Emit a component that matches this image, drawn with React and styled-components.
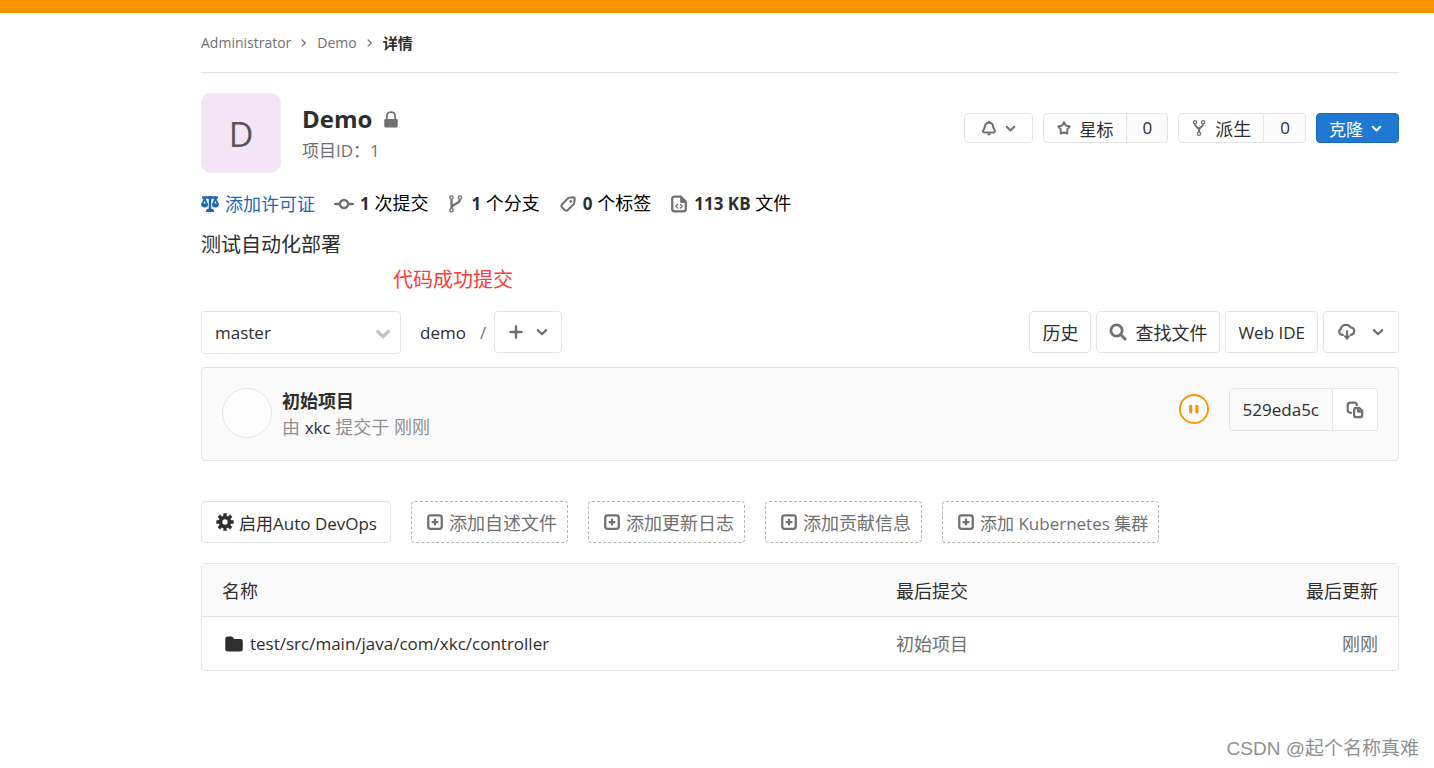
import React from 'react';
import styled, { createGlobalStyle, css } from 'styled-components';

const App = () => (
  <Page>
    <GlobalStyle />
    <TopBar />
    <Container>
      <Breadcrumbs aria-label="breadcrumb">
        <a href="#administrator">Administrator</a>
        <Icon name="angle-right" size={10} />
        <a href="#demo">Demo</a>
        <Icon name="angle-right" size={10} />
        <strong>详情</strong>
      </Breadcrumbs>

      <ProjectHeader>
        <Avatar>D</Avatar>
        <ProjectTitle>
          <h1>
            Demo <Icon name="lock" size={18} />
          </h1>
          <p>项目ID：1</p>
        </ProjectTitle>
        <ProjectActions>
          <SmallButton type="button" aria-label="notifications" $wide>
            <Icon name="bell" size={16} />
            <Icon name="angle-down" size={11} />
          </SmallButton>
          <Group>
            <SmallButton type="button">
              <Icon name="star" size={16} />
              星标
            </SmallButton>
            <Count href="#starrers">0</Count>
          </Group>
          <Group>
            <SmallButton type="button" $size={18}>
              <Icon name="fork" size={16} />
              派生
            </SmallButton>
            <Count href="#forks">0</Count>
          </Group>
          <CloneButton type="button">
            克隆
            <Icon name="angle-down" size={11} />
          </CloneButton>
        </ProjectActions>
      </ProjectHeader>

      <Stats>
        <StatLink href="#license" $primary>
          <Icon name="scale" size={18} />
          添加许可证
        </StatLink>
        <StatLink href="#commits">
          <Icon name="commit" size={20} />
          <span>
            <strong>1</strong> 次提交
          </span>
        </StatLink>
        <StatLink href="#branches">
          <Icon name="branch" size={18} />
          <span>
            <strong>1</strong> 个分支
          </span>
        </StatLink>
        <StatLink href="#tags">
          <Icon name="tag" size={18} />
          <span>
            <strong>0</strong> 个标签
          </span>
        </StatLink>
        <StatLink href="#files">
          <Icon name="doc-code" size={18} />
          <span>
            <strong>113 KB</strong> 文件
          </span>
        </StatLink>
      </Stats>

      <Description>测试自动化部署</Description>
      <Note>代码成功提交</Note>

      <TreeControls>
        <RefPicker>
          <select aria-label="branch" defaultValue="master">
            <option>master</option>
          </select>
          <Icon name="chevron-down" size={16} />
        </RefPicker>
        <Path>
          <a href="#root">demo</a>
          <span>/</span>
        </Path>
        <Button type="button" aria-label="add to tree" $gap={12} $pad={13}>
          <Icon name="plus" size={16} />
          <Icon name="angle-down" size={12} />
        </Button>
        <Spacer />
        <ButtonList>
          <Button type="button" $size={18}>
            历史
          </Button>
          <Button type="button" $size={18} $gap={8}>
            <Icon name="search" size={18} />
            查找文件
          </Button>
          <Button type="button">Web IDE</Button>
          <Button type="button" aria-label="download" $gap={16} $pad={14}>
            <Icon name="download" size={18} />
            <Icon name="angle-down" size={12} />
          </Button>
        </ButtonList>
      </TreeControls>

      <CommitCard>
        <AuthorAvatar />
        <CommitText>
          <a href="#commit">初始项目</a>
          <p>
            由 <a href="#xkc">xkc</a> 提交于 <time>刚刚</time>
          </p>
        </CommitText>
        <PipelineStatus href="#pipeline" aria-label="pipeline pending">
          <Icon name="pending" size={30} />
        </PipelineStatus>
        <Group>
          <Sha>529eda5c</Sha>
          <CopyButton type="button" aria-label="copy commit SHA">
            <Icon name="copy" size={18} />
          </CopyButton>
        </Group>
      </CommitCard>

      <Suggestions>
        <DevOpsButton type="button">
          <Icon name="gear" size={18} />
          启用Auto DevOps
        </DevOpsButton>
        {['添加自述文件', '添加更新日志', '添加贡献信息'].map(label => (
          <DashedButton type="button" key={label}>
            <Icon name="add" size={18} />
            {label}
          </DashedButton>
        ))}
        <DashedButton type="button" $size={17}>
          <Icon name="add" size={18} />
          添加 Kubernetes 集群
        </DashedButton>
      </Suggestions>

      <TreeTable>
        <thead>
          <tr>
            <th>名称</th>
            <th>最后提交</th>
            <th>最后更新</th>
          </tr>
        </thead>
        <tbody>
          <tr>
            <td>
              <a href="#controller">
                <Icon name="folder" size={20} />
                test/src/main/java/com/xkc/controller
              </a>
            </td>
            <td>初始项目</td>
            <td>刚刚</td>
          </tr>
        </tbody>
      </TreeTable>
    </Container>
    <Watermark>CSDN @起个名称真难</Watermark>
  </Page>
);

export default App;

const line = { fill: 'none', stroke: 'currentColor', strokeWidth: 2 };
const round = { ...line, strokeLinecap: 'round', strokeLinejoin: 'round' };

// all glyphs are drawn on a 16px grid
const glyphs = {
  'angle-right': <path {...round} d="M5 3l5 5-5 5" />,
  'angle-down': <path {...round} strokeWidth="3" d="M2.500 5.500L8 11l5.500-5.500" />,
  'chevron-down': (
    <path {...line} strokeWidth="3.400" d="M1.800 5.500L8 11.700l6.200-6.200" />
  ),
  lock: (
    <>
      <path {...line} strokeWidth="1.600" d="M4.300 9V5.500a3.700 3.700 0 0 1 7.400 0V9" />
      <rect x="2" y="8" width="12" height="7.500" rx="1" fill="currentColor" />
    </>
  ),
  bell: (
    <>
      <path
        {...round}
        d="M8 2.800c-2.300 0-3.900 1.600-4.200 4.200C3.500 9 2 9.900 2 11.200c0 .9.700 1.400 1.500 1.400h9c.8 0 1.500-.5 1.500-1.400 0-1.300-1.500-2.200-1.800-4.200C11.900 4.400 10.300 2.800 8 2.800z"
      />
      <path fill="currentColor" d="M7 1h2v2H7zM6 13.400h4a2 2 0 0 1-4 0z" />
    </>
  ),
  star: (
    <path
      {...round}
      d="M8 2.300l1.800 3.300 4 .8-2.500 2.800v4.300L8 12.500l-3.300 1V9.200L2.200 6.400l4-.8z"
    />
  ),
  fork: (
    <>
      <circle {...line} strokeWidth="1.300" cx="4" cy="2.300" r="1.600" />
      <circle {...line} strokeWidth="1.300" cx="12" cy="2.300" r="1.600" />
      <circle {...line} strokeWidth="1.300" cx="8" cy="13.700" r="1.600" />
      <path {...line} d="M4 4.200c0 3.500 4 2.800 4 5.800 0-3 4-2.300 4-5.800M8 9v3.200" />
    </>
  ),
  scale: (
    <>
      <path {...line} strokeWidth="2.200" d="M1 2.300h14M8 2v11" />
      <path {...line} strokeWidth="1.600" d="M3.200 3L1 8.500M3.200 3l2.200 5.500M12.800 3l-2.200 5.500M12.800 3L15 8.500" />
      <path
        fill="currentColor"
        d="M0 7.500h6.400a3.200 3.600 0 0 1-6.400 0zM9.600 7.500H16a3.200 3.600 0 0 1-6.400 0zM6.500 1h3v2.500h-3zM4.300 15a3.700 3 0 0 1 7.400 0z"
      />
    </>
  ),
  commit: (
    <>
      <circle {...line} cx="8" cy="8" r="3.200" />
      <path {...round} d="M1 8h3M12 8h3" />
    </>
  ),
  branch: (
    <>
      <circle {...line} strokeWidth="1.200" cx="4" cy="2.300" r="1.500" />
      <circle {...line} strokeWidth="1.200" cx="4" cy="13.500" r="1.500" />
      <circle {...line} strokeWidth="1.200" cx="11.500" cy="2.300" r="1.500" />
      <path {...line} d="M4 4v8M11.500 4c0 4.500-7 3-7.300 7.500" />
    </>
  ),
  tag: (
    <>
      <path
        {...round}
        strokeWidth="1.800"
        d="M9 2.500l4-.4c.6 0 1 .4 1 1l-.5 4c0 .4-.2.700-.4 1l-5.300 5.200c-.8.800-2 .8-2.800 0l-2.200-2.200c-.8-.8-.8-2 0-2.800L8 2.900c.3-.2.600-.4 1-.4z"
      />
      <circle cx="10.400" cy="5.700" r="1.200" fill="currentColor" />
    </>
  ),
  'doc-code': (
    <>
      <path {...round} d="M9 1.500H4C2.900 1.500 2 2.400 2 3.500v9c0 1.100.9 2 2 2h8c1.100 0 2-.9 2-2V6.500" />
      <path fill="currentColor" d="M9 .5h1l5 5V7h-5a1 1 0 0 1-1-1z" />
      <path {...round} strokeWidth="1.200" d="M6.700 8.500L5.200 10l1.500 1.500M9.300 8.500l1.500 1.500-1.500 1.500" />
    </>
  ),
  plus: <path {...round} strokeWidth="2.400" d="M8 2.500v11M2.500 8h11" />,
  search: (
    <>
      <circle {...line} strokeWidth="2.400" cx="6.700" cy="6.700" r="5" />
      <path {...line} strokeWidth="2.600" d="M10.300 10.300l4.800 4.800" />
    </>
  ),
  download: (
    <>
      <path
        {...round}
        d="M4.300 10.500H4A2.800 2.800 0 0 1 2.500 5.300C2.700 3 5 1.300 7.600 1.600c1.600.1 2.800.9 3.500 2.200 1.900.1 3.300 1.600 3.300 3.400 0 1.800-1.300 3.200-2.900 3.300"
      />
      <path {...line} d="M8 6.500V12" />
      <path fill="currentColor" d="M4.600 11h6.800L8 15.300z" />
    </>
  ),
  pending: (
    <>
      <circle {...line} strokeWidth="1" cx="8" cy="8" r="7.500" fill="#fff" />
      <rect x="5.400" y="5.900" width="1.700" height="4.300" rx=".3" fill="currentColor" />
      <rect x="8.700" y="5.900" width="1.700" height="4.300" rx=".3" fill="currentColor" />
    </>
  ),
  copy: (
    <>
      <path {...round} d="M4.500 10.500H4a2.500 2.500 0 0 1-2.500-2.500V4C1.500 2.500 2.500 1.500 4 1.500h3.200A2.500 2.500 0 0 1 9.700 3.500" />
      <path {...round} d="M9.200 6.200h2.600l2.600 2.500v3.700c0 1.200-.8 2-2 2H9.200c-1.200 0-2-.8-2-2V8.200c0-1.200.8-2 2-2z" />
      <path fill="currentColor" d="M9.800 6l5.200 4.500h-3.700A1.500 1.500 0 0 1 9.800 9z" />
    </>
  ),
  gear: (
    <>
      <circle {...line} strokeWidth="3.200" cx="8" cy="8" r="4" />
      <path
        {...line}
        strokeWidth="3"
        d="M8 .3v3M8 12.700v3M.3 8h3M12.700 8h3M2.500 2.500l2.100 2.100M11.400 11.400l2.100 2.100M2.500 13.500l2.100-2.100M11.400 4.600l2.100-2.100"
      />
    </>
  ),
  add: (
    <>
      <rect {...line} x="2" y="2" width="12" height="12" rx="2" />
      <path {...round} d="M8 5.800v4.400M5.800 8h4.400" />
    </>
  ),
  folder: (
    <path
      fill="currentColor"
      d="M1 4a2 2 0 0 1 2-2h3.500l1.600 2H13a2 2 0 0 1 2 2v6a2 2 0 0 1-2 2H3a2 2 0 0 1-2-2z"
    />
  ),
};

function Icon({ name, size }) {
  return (
    <Svg width={size} height={size} viewBox="0 0 16 16" aria-hidden="true">
      {glyphs[name]}
    </Svg>
  );
}

const GlobalStyle = createGlobalStyle`
  * {
    box-sizing: border-box;
  }

  body {
    margin: 0;
    background: #fff;
    color: #2e2e2e;
    font-family: "Open Sans", "Noto Sans CJK SC", sans-serif;
    font-size: 17px;
    line-height: 26px;
  }

  h1, p {
    margin: 0;
  }

  a {
    color: inherit;
    text-decoration: none;
  }

  button, select {
    font-family: inherit;
    color: inherit;
    cursor: pointer;
  }
`;

const Svg = styled.svg`
  flex: none;
  color: #707070;
`;

const Page = styled.div`
  position: relative;
  min-height: 100vh;
`;

const TopBar = styled.div`
  height: 13px;
  background: #fc9403;
`;

const Container = styled.main`
  padding: 0 35px 0 201px;
`;

const Breadcrumbs = styled.nav`
  display: flex;
  align-items: center;
  gap: 8px;
  height: 60px;
  border-bottom: 1px solid #e5e5e5;
  color: #707070;
  font-size: 14px;

  strong {
    color: #2e2e2e;
    font-size: 15px;
  }
`;

const ProjectHeader = styled.header`
  display: flex;
  align-items: center;
  margin-top: 20px;
`;

const Avatar = styled.div`
  width: 80px;
  height: 80px;
  border: 1px solid #eeeeee;
  border-radius: 10px;
  background: #f3e5f5;
  color: #555;
  font-size: 34px;
  line-height: 80px;
  text-align: center;
`;

const ProjectTitle = styled.div`
  flex: 1;
  margin: 4px 0 0 21px;

  h1 {
    display: flex;
    align-items: center;
    gap: 10px;
    font-size: 24px;
    line-height: 32px;
  }

  p {
    color: #707070;
    line-height: 32px;
  }
`;

const ProjectActions = styled.div`
  display: flex;
  gap: 10px;
  margin-bottom: 10px;
`;

const Group = styled.div`
  display: flex;

  > :first-child {
    border-top-right-radius: 0;
    border-bottom-right-radius: 0;
  }

  > :last-child {
    border-left: 0;
    border-top-left-radius: 0;
    border-bottom-left-radius: 0;
  }
`;

const box = css`
  display: flex;
  align-items: center;
  border: 1px solid #e5e5e5;
  border-radius: 4px;
  background: #fff;
  white-space: nowrap;
`;

const SmallButton = styled.button`
  ${box}
  gap: 8px;
  height: 30px;
  padding: 0 ${props => (props.$wide ? 16 : 12)}px;
  font-size: ${props => props.$size || 17}px;
`;

const Count = styled.a`
  ${box}
  height: 30px;
  padding: 0 15px 0 16px;
  background: #fafafa;
`;

const CloneButton = styled(SmallButton)`
  padding: 0 16px 0 12px;
  border-color: #1b69b6;
  background: #1f78d1;
  color: #fff;

  ${Svg} {
    color: #fff;
  }
`;

const Stats = styled.div`
  display: flex;
  gap: 19px;
  margin-top: 17px;
`;

const StatLink = styled.a`
  display: flex;
  align-items: center;
  gap: 6px;
  color: ${props => (props.$primary ? '#1b69b6' : '#000')};
  font-size: 18px;

  strong {
    color: #2e2e2e;
    font-size: 17px;
  }

  ${Svg} {
    color: ${props => (props.$primary ? '#1b69b6' : '#707070')};
  }
`;

const Description = styled.p`
  margin-top: 13px;
  font-size: 20px;
  line-height: 30px;
`;

const Note = styled.p`
  margin: 4px 0 0 192px;
  color: #fe3b3b;
  font-size: 20px;
  line-height: 32px;
`;

const TreeControls = styled.div`
  display: flex;
  align-items: flex-start;
  margin-top: 15px;
`;

const RefPicker = styled.label`
  ${box}
  width: 200px;
  height: 43px;
  padding-right: 9px;

  select {
    flex: 1;
    height: 100%;
    padding: 0 13px;
    border: 0;
    background: none;
    appearance: none;
    font-size: 17px;
  }

  ${Svg} {
    color: #c4c4c4;
  }
`;

const Path = styled.div`
  display: flex;
  gap: 14px;
  margin: 0 8px 0 19px;
  line-height: 43px;

  span {
    color: #707070;
  }
`;

const Button = styled.button`
  ${box}
  gap: ${props => props.$gap || 0}px;
  height: 42px;
  padding: 0 ${props => props.$pad || 12}px;
  font-size: ${props => props.$size || 17}px;
`;

const Spacer = styled.div`
  flex: 1;
`;

const ButtonList = styled.div`
  display: flex;
  gap: 5px;
`;

const CommitCard = styled.section`
  display: flex;
  align-items: flex-start;
  margin-top: 13px;
  padding: 20px 20px 19px;
  border: 1px solid #e5e5e5;
  border-radius: 4px;
  background: #fafafa;
`;

const AuthorAvatar = styled.div`
  width: 50px;
  height: 50px;
  border: 1px solid #e5e5e5;
  border-radius: 50%;
  background: #fdfdfd;
`;

const CommitText = styled.div`
  flex: 1;
  margin-left: 10px;

  > a {
    display: block;
    font-size: 18px;
    font-weight: 700;
  }

  p {
    color: #919191;
    font-size: 18px;
  }

  p a {
    color: #2e2e2e;
    font-size: 17px;
  }
`;

const PipelineStatus = styled.a`
  display: flex;
  margin: 6px 20px 0 0;

  ${Svg} {
    color: #fc9403;
  }
`;

const Sha = styled.span`
  ${box}
  height: 43px;
  padding: 0 13px;
  background: #fafafa;
`;

const CopyButton = styled.button`
  ${box}
  height: 43px;
  padding: 0 13px;
`;

const Suggestions = styled.div`
  display: flex;
  gap: 20px;
  margin: 40px 0 20px;
`;

const DevOpsButton = styled(Button)`
  gap: 5px;
  padding: 0 13px 0 14px;

  ${Svg} {
    color: #2e2e2e;
  }
`;

const DashedButton = styled(Button)`
  gap: 5px;
  padding: 0 10px 0 14px;
  border: 1px dashed #b5b5b5;
  color: #707070;
  font-size: ${props => props.$size || 18}px;
`;

const TreeTable = styled.table`
  width: 100%;
  border: 1px solid #e5e5e5;
  border-radius: 4px;
  border-spacing: 0;
  table-layout: fixed;
  font-size: 18px;

  th,
  td {
    padding: 14px 20px 13px;
    text-align: left;
    font-weight: 400;
  }

  th {
    width: 342px;
    padding-bottom: 12px;
    border-bottom: 1px solid #e5e5e5;
    background: #fafafa;
  }

  th:first-child {
    width: auto;
  }

  th:last-child,
  td:last-child {
    text-align: right;
  }

  th:last-child {
    width: 180px;
  }

  td {
    color: #707070;
  }

  td a {
    display: flex;
    align-items: center;
    gap: 6px;
    padding-left: 2px;
    color: #2e2e2e;
    font-size: 17px;
  }

  ${Svg} {
    color: #2e2e2e;
  }
`;

const Watermark = styled.div`
  position: absolute;
  right: 15px;
  bottom: 5px;
  color: #909090;
  font-family: "Liberation Sans", "Noto Sans CJK SC", sans-serif;
  font-size: 19px;
  line-height: 28px;
`;
